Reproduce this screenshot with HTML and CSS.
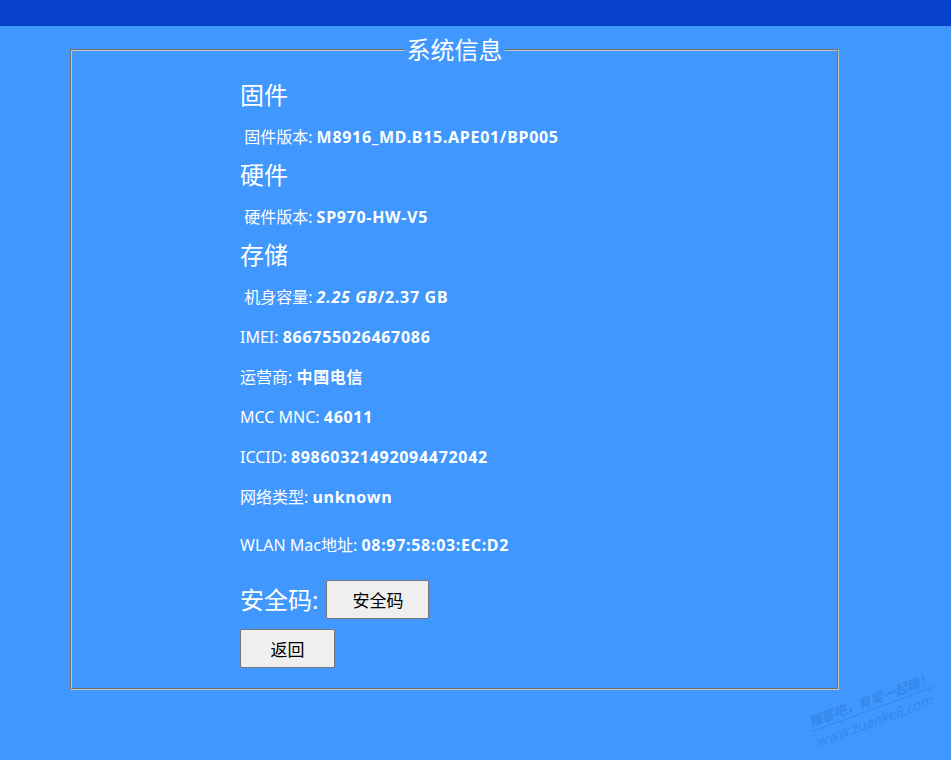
FILE: index.html
```html
<!DOCTYPE html>
<html lang="zh-CN">
<head>
<meta charset="utf-8">
<title>系统信息</title>
<link rel="stylesheet" href="styles.css">
</head>
<body>
<header class="topbar"></header>
<main class="page">
  <fieldset class="panel">
    <legend class="panel-title">系统信息</legend>
    <div class="info">
      <div class="section-title first">固件</div>
      <div class="field after-title">&nbsp;固件版本: <b>M8916_MD.B15.APE01/BP005</b></div>
      <div class="section-title">硬件</div>
      <div class="field after-title">&nbsp;硬件版本: <b>SP970-HW-V5</b></div>
      <div class="section-title">存储</div>
      <div class="field after-title">&nbsp;机身容量: <b><i>2.25 GB</i>/2.37 GB</b></div>
      <div class="field">IMEI: <b>866755026467086</b></div>
      <div class="field">运营商: <b>中国电信</b></div>
      <div class="field">MCC MNC: <b>46011</b></div>
      <div class="field">ICCID: <b>89860321492094472042</b></div>
      <div class="field">网络类型: <b>unknown</b></div>
      <div class="field wlan">WLAN Mac地址: <b>08:97:58:03:EC:D2</b></div>
      <div class="code-row">
        <span class="code-label">安全码:</span>
        <button class="btn btn-code" type="button">安全码</button>
      </div>
      <div class="back-row">
        <button class="btn btn-back" type="button">返回</button>
      </div>
    </div>
  </fieldset>
</main>
<div class="watermark">
  <div class="wm-line1">赚客吧，有奖一起赚！</div>
  <div class="wm-line2">www.zuanke8.com</div>
</div>
</body>
</html>
```

FILE: styles.css
```css
html, body {
  margin: 0;
  padding: 0;
}
body {
  background: #4098ff;
  color: #ffffff;
  font-family: "Noto Sans", "Noto Sans CJK SC", sans-serif;
  width: 951px;
  height: 760px;
  overflow: hidden;
  position: relative;
}
.topbar {
  height: 26px;
  background: #0841c9;
}
.page {
  padding: 9px 0 0 70px;
}
.panel {
  margin: 0;
  width: 765px;
  box-sizing: content-box;
  padding: 0 0 20px 0;
  border: 2px groove #c4c4c4;
}
.panel-title {
  margin: 0 auto;
  padding: 0 2px;
  font-size: 24px;
  line-height: 30px;
  color: #ffffff;
}
.info {
  display: flex;
  flex-direction: column;
  align-items: flex-start;
  padding: 15px 0 0 168px;
}
.section-title {
  font-size: 24px;
  line-height: 30px;
  margin-top: 13px;
}
.section-title.first {
  margin-top: 0;
}
.field {
  font-size: 16px;
  line-height: 20px;
  margin-top: 20px;
}
.field.after-title {
  margin-top: 17px;
}
.field.wlan {
  margin-top: 28px;
}
.field b {
  font-weight: 700;
  letter-spacing: 0.7px;
}
.code-row {
  display: flex;
  align-items: center;
  gap: 8px;
  margin-top: 25px;
}
.code-label {
  font-size: 24px;
  line-height: 30px;
}
.back-row {
  margin-top: 10px;
}
.btn {
  height: 39px;
  background: #efefef;
  color: #000000;
  border: 1px solid #767676;
  border-radius: 2px;
  font-family: "Noto Sans", "Noto Sans CJK SC", sans-serif;
  font-size: 17px;
  padding: 0;
  margin: 0;
}
.btn-code {
  width: 103px;
}
.btn-back {
  width: 95px;
}
.watermark {
  position: absolute;
  left: 800px;
  top: 697px;
  transform: rotate(-20deg);
  transform-origin: left top;
  color: #3488ea;
  font-family: "Noto Sans CJK SC", sans-serif;
  font-weight: 700;
  font-style: italic;
  line-height: 1;
}
.wm-line1 {
  font-size: 13px;
  padding-bottom: 3px;
  border-bottom: 1px solid #3488ea;
  margin-top: 20px;
}
.wm-line2 {
  font-size: 14px;
  padding-top: 3px;
  font-weight: 400;
}
```
